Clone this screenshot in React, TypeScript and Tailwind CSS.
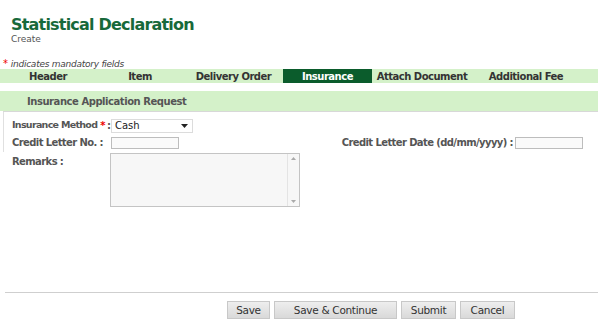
import React from 'react';

const tabs = [
  { label: 'Header', w: 'w-[96px]' },
  { label: 'Item', w: 'w-[88px]' },
  { label: 'Delivery Order', w: 'w-[99px]' },
  { label: 'Insurance', w: 'w-[89px]', active: true },
  { label: 'Attach Document', w: 'w-[100px]' },
  { label: 'Additional Fee', w: 'w-[108px]' },
];

const Btn = ({ label, w }: { label: string; w: string }) => (
  <button
    className={`${w} h-[18px] bg-gradient-to-b from-[#eeeeee] to-[#d9d9d9] border border-[#c8c8c8] text-[10.5px] tracking-[-0.3px] text-[#333] leading-none`}
  >
    {label}
  </button>
);

export default function App() {
  return (
    <div className="w-[598px] h-[319px] bg-white overflow-hidden font-['DejaVu_Sans',Verdana,sans-serif] text-[#444]">
      {/* title */}
      <div className="pt-[16px] pl-[11px]">
        <h1 className="text-[16px] font-bold leading-[18px] text-[#17693a] tracking-[-0.8px]">Statistical Declaration</h1>
        <div className="text-[9px] leading-[10px] text-[#555]">Create</div>
      </div>
      <div className="mt-[15px] pl-[3px] flex items-start text-[9px] leading-[10px] italic tracking-[-0.25px] text-[#444]">
        <span className="text-[#e00] not-italic mr-[3px] text-[10px]">*</span>
        <span>indicates mandatory fields</span>
      </div>

      {/* tabs */}
      <div className="flex h-[14px] bg-[#d4f1c9] text-[10px] font-bold tracking-[-0.5px] text-[#333]">
        {tabs.map((t) =>
          t.active ? (
            <div key={t.label} className={`${t.w} flex items-center justify-center bg-[#0b5c2c] text-white`}>
              {t.label}
            </div>
          ) : (
            <div key={t.label} className={`${t.w} flex items-center justify-center`}>
              {t.label}
            </div>
          ),
        )}
      </div>

      {/* section header */}
      <div className="mt-[8px] h-[20px] bg-[#d4f1c9] flex items-center pl-[27px] text-[10px] font-bold tracking-[-0.45px] text-[#555]">
        Insurance Application Request
      </div>

      {/* form */}
      <div className="ml-[3px] border-t border-[#d8d8d8] text-[10px] font-bold tracking-[-0.6px] text-[#555]">
        <div className="border-l border-[#e0e0e0] pt-[6px] pl-[8px] pb-[2px]">
          <div className="flex items-center h-[15px]">
            <span className="w-[99px] shrink-0 whitespace-nowrap flex items-center">
              <span className="text-[9.5px] tracking-[-0.7px]">Insurance Method</span>
              <span className="text-[#e00] ml-[3px]">*</span>
              <span className="ml-[2px]">:</span>
            </span>
            <div className="w-[82px] h-[14px] border border-[#dcdcdc] bg-white flex items-center justify-between pl-[3px] pr-[4px] font-normal tracking-normal text-[10px] text-[#222]">
              <span>Cash</span>
              <svg width="7" height="4" viewBox="0 0 7 4"><path d="M0 0 L7 0 L3.5 4 z" fill="#222" /></svg>
            </div>
          </div>
          <div className="flex items-center h-[15px] mt-[2px]">
            <span className="w-[99px] shrink-0 whitespace-nowrap">Credit Letter No. :</span>
            <div className="w-[68px] h-[12px] border border-[#bdbdbd] bg-[#fafafa]" />
            <div className="flex-1 flex items-center justify-end pr-[15px]">
              <span className="mr-[2px] whitespace-nowrap">Credit Letter Date (dd/mm/yyyy) :</span>
              <div className="w-[68px] h-[12px] border border-[#bdbdbd] bg-[#fafafa]" />
            </div>
          </div>
        </div>
        <div className="flex items-start pl-[9px] mt-[1px]">
          <span className="w-[98px] pt-[1px]">Remarks :</span>
          <div className="w-[190px] h-[54px] border border-[#c4c4c4] bg-[#f7f7f7] flex justify-end">
            <div className="w-[12px] h-full border-l border-[#e4e4e4] flex flex-col items-center justify-between py-[3px]">
              <svg width="5" height="3" viewBox="0 0 5 3"><path d="M0 3 L5 3 L2.5 0 z" fill="#aaa" /></svg>
              <svg width="5" height="3" viewBox="0 0 5 3"><path d="M0 0 L5 0 L2.5 3 z" fill="#aaa" /></svg>
            </div>
          </div>
        </div>
      </div>

      {/* footer */}
      <div className="mt-[85px] ml-[5px] border-t border-[#cfcfcf]" />
      <div className="mt-[8px] flex pl-[227px] gap-[4px]">
        <Btn label="Save" w="w-[43px]" />
        <Btn label="Save & Continue" w="w-[123px]" />
        <Btn label="Submit" w="w-[55px]" />
        <Btn label="Cancel" w="w-[55px]" />
      </div>
    </div>
  );
}
